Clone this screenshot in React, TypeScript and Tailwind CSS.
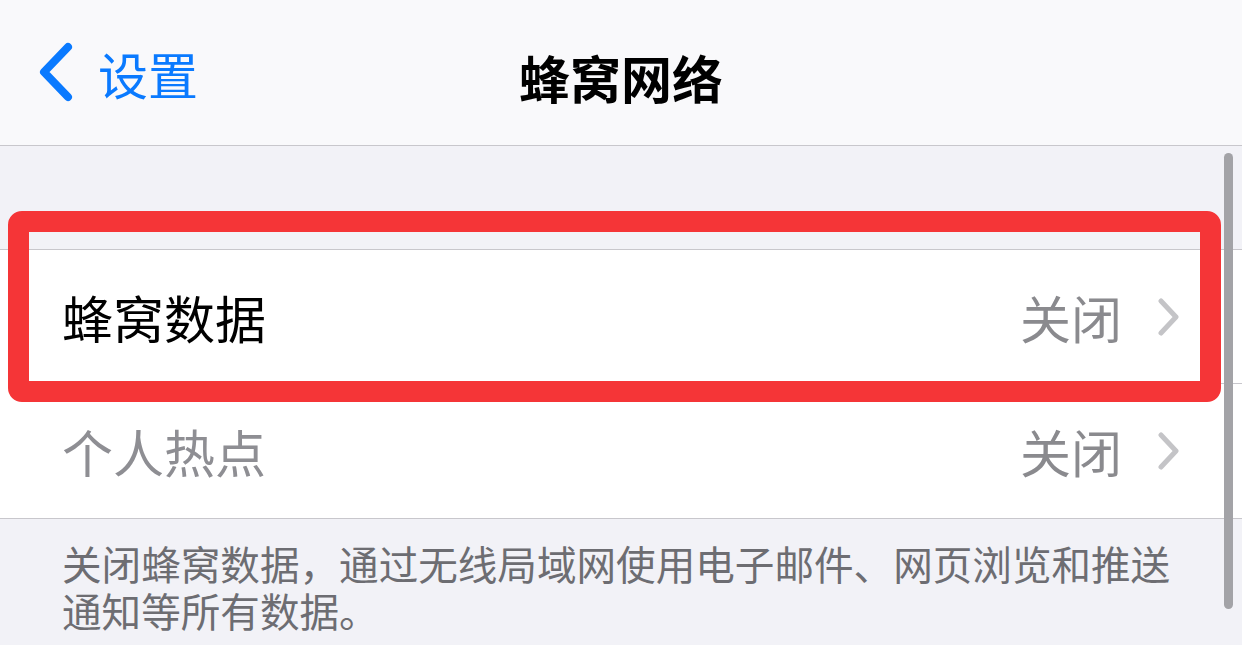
const font = { fontFamily: '"Noto Sans CJK SC", "Noto Sans", sans-serif' };

function Chevron() {
  return (
    <svg width="22" height="38" viewBox="0 0 22 38" className="shrink-0">
      <path d="M3 3 L18 19 L3 35" fill="none" stroke="#c4c4c7" strokeWidth="5" strokeLinecap="round" strokeLinejoin="round" />
    </svg>
  );
}

function Row({ label, value, muted, last }: { label: string; value: string; muted?: boolean; last?: boolean }) {
  return (
    <div className="relative flex h-[134px] items-center pl-[62px] pr-[62px]">
      <span className={`flex-1 text-[51px] leading-none ${muted ? "text-[#8e8e93]" : "text-black"}`}>{label}</span>
      <span className="mr-[36px] text-[51px] leading-none text-[#8a8a8e]">{value}</span>
      <Chevron />
      {!last ? <div className="absolute bottom-0 left-[62px] right-0 h-px bg-[#c8c7cc]" /> : null}
    </div>
  );
}

export default function App() {
  return (
    <div className="relative h-[645px] w-[1242px] overflow-hidden bg-[#f2f2f7]" style={font}>
      <header className="relative flex h-[146px] items-center border-b border-[#c8c7cc] bg-[#f9f9fb]">
        <div className="flex items-center pl-[38px] text-[#0a7aff]">
          <svg width="38" height="62" viewBox="0 0 38 62">
            <path d="M30 5 L6 30 L30 55" fill="none" stroke="#0a7aff" strokeWidth="8" strokeLinecap="round" strokeLinejoin="round" />
          </svg>
          <span className="ml-[22px] text-[50px] leading-none">设置</span>
        </div>
        <h1 className="absolute left-0 right-0 top-[52px] text-center text-[51px] font-bold leading-none text-black">
          蜂窝网络
        </h1>
      </header>

      <div className="mt-[103px] border-y border-[#c8c7cc] bg-white">
        <Row label="蜂窝数据" value="关闭" />
        <Row label="个人热点" value="关闭" muted last />
      </div>

      <p className="pl-[62px] pr-[62px] pt-[20px] text-[39.6px] leading-[47px] text-[#6d6d72]">
        关闭蜂窝数据，通过无线局域网使用电子邮件、网页浏览和推送通知等所有数据。
      </p>

      <div className="absolute left-[8px] top-[211px] h-[191px] w-[1213px] rounded-[14px] border-[21px] border-[#f53537]" />
      <div className="absolute left-[1224px] top-[153px] h-[456px] w-[9px] rounded-full bg-[#a3a3a7]" />
    </div>
  );
}
